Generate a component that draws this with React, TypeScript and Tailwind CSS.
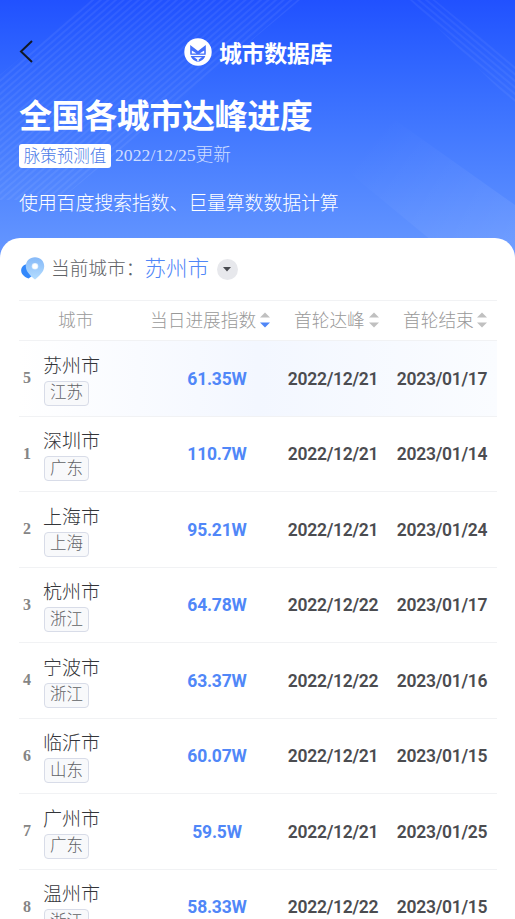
import clsx from "clsx";

type City = { rank: number; name: string; province: string; index: string; peak: string; end: string };

const CITIES: City[] = [
  { rank: 5, name: "苏州市", province: "江苏", index: "61.35W", peak: "2022/12/21", end: "2023/01/17" },
  { rank: 1, name: "深圳市", province: "广东", index: "110.7W", peak: "2022/12/21", end: "2023/01/14" },
  { rank: 2, name: "上海市", province: "上海", index: "95.21W", peak: "2022/12/21", end: "2023/01/24" },
  { rank: 3, name: "杭州市", province: "浙江", index: "64.78W", peak: "2022/12/22", end: "2023/01/17" },
  { rank: 4, name: "宁波市", province: "浙江", index: "63.37W", peak: "2022/12/22", end: "2023/01/16" },
  { rank: 6, name: "临沂市", province: "山东", index: "60.07W", peak: "2022/12/21", end: "2023/01/15" },
  { rank: 7, name: "广州市", province: "广东", index: "59.5W", peak: "2022/12/21", end: "2023/01/25" },
  { rank: 8, name: "温州市", province: "浙江", index: "58.33W", peak: "2022/12/22", end: "2023/01/15" },
];

const CURRENT = "苏州市";

function Logo() {
  return (
    <svg width="28" height="28" viewBox="0 0 28 28">
      <circle cx="14" cy="14" r="13.7" fill="#fff" />
      <path d="M6.200 7 14 13l7.800-6v8c0 4.700-3.500 8.300-7.800 8.800-4.300-.5-7.800-4.100-7.800-8.800Z" fill="#4470fb" />
      <path d="M7.800 12.600 12.500 15.500H7.800ZM20.200 12.600l-4.700 2.900h4.700Z" fill="#fff" />
      <path d="M5.500 17.400h17" stroke="#fff" strokeWidth="1.200" />
      <path d="M10 19.300h8l-3.300 2.300v1.600h-1.400v-1.600Z" fill="#fff" />
    </svg>
  );
}

function Pin() {
  return (
    <svg width="24" height="24" viewBox="0 0 24 24">
      <defs>
        <linearGradient id="pin" x1="0" y1="0" x2="0" y2="1">
          <stop offset="0" stopColor="#86b9f8" />
          <stop offset="1" stopColor="#b4ddff" />
        </linearGradient>
        <radialGradient id="hole">
          <stop offset="0.6" stopColor="#fff" />
          <stop offset="1" stopColor="#d5e9fe" />
        </radialGradient>
      </defs>
      <path d="M7.500 7C3 7-.2 10 .2 14c.3 4 4.300 6.300 7.300 7.500L11 19Z" fill="#3288fb" />
      <path d="M14 .2c5.300 0 9.200 3.800 9.200 9 0 5.600-5 9.600-9.200 13.300-4.200-3.700-9.200-7.700-9.200-13.300 0-5.200 3.900-9 9.200-9Z" fill="url(#pin)" />
      <circle cx="14" cy="9.300" r="3.300" fill="url(#hole)" />
    </svg>
  );
}

function Sort({ active }: { active?: boolean }) {
  return (
    <svg width="10" height="16" viewBox="0 0 10 16">
      <path d="M0 5.500 5 0.500l5 5Z" fill="#c0c0c0" />
      <path d="M0 10.500h10l-5 5Z" fill={active ? "#4f86f7" : "#c0c0c0"} />
    </svg>
  );
}

function HeaderArt() {
  return (
    <svg className="absolute inset-0" width="515" height="260" viewBox="0 0 515 260">
      <defs>
        <pattern id="up" width="5" height="5" patternUnits="userSpaceOnUse" patternTransform="rotate(-41)">
          <path d="M0 1h5" stroke="#fff" strokeOpacity=".12" />
        </pattern>
        <pattern id="down" width="5" height="5" patternUnits="userSpaceOnUse" patternTransform="rotate(40)">
          <path d="M0 1h5" stroke="#fff" strokeOpacity=".1" />
        </pattern>
        <linearGradient id="beam" gradientUnits="userSpaceOnUse" x1="370" y1="140" x2="500" y2="245">
          <stop offset="0" stopColor="#fff" stopOpacity="0" />
          <stop offset="1" stopColor="#fff" stopOpacity=".08" />
        </linearGradient>
      </defs>
      <path d="M0 75 90 0H300L60 200H0Z" fill="url(#up)" />
      <path d="M410 0h25l80 65v40Z" fill="url(#down)" />
      <path d="M340 165 395 120 515 205v55h-60Z" fill="url(#beam)" />
    </svg>
  );
}

function Row({ city }: { city: City }) {
  return (
    <div
      className={clsx(
        "grid h-[75.5px] grid-cols-[25px_111px_124px_108px_110px] items-center border-b border-[#f1f2f4]",
        city.name === CURRENT && "bg-linear-to-r from-white via-[#f3f7ff] to-[#fafcff]",
      )}
    >
      <span className="pl-1 font-['Liberation_Serif'] text-base font-bold text-[#858585]">{city.rank}</span>
      <div className="flex flex-col items-start">
        <span className="-ml-px text-[19px] leading-7 text-[#333539]">{city.name}</span>
        <span className="mt-0.5 flex h-[25px] w-[45px] items-center justify-center rounded border border-[#d8dce8] bg-[#f8f9fb] pb-1 text-[16.500px] leading-none text-[#606266]">
          {city.province}
        </span>
      </div>
      <span className="pt-px text-center font-[Roboto] text-[17.5px] font-bold tracking-[-0.2px] text-[#5087f8]">{city.index}</span>
      <span className="pt-px text-center font-[Roboto] text-[17.5px] font-semibold tracking-[-0.3px] text-[#4b4c50]">{city.peak}</span>
      <span className="pt-px text-center font-[Roboto] text-[17.5px] font-semibold tracking-[-0.3px] text-[#4b4c50]">{city.end}</span>
    </div>
  );
}

export default function App() {
  return (
    <div className="h-[919px] w-[515px] overflow-hidden bg-white font-['Noto_Sans_CJK_SC',sans-serif] font-light">
      <header className="relative h-[260px] overflow-hidden bg-linear-to-b from-[#2151ff] to-[#6798ff] text-white">
        <HeaderArt />
        <div className="relative px-[19px]">
          <div className="flex h-[103px] items-center justify-center gap-[7px] pl-px">
            <svg className="absolute left-[19px]" width="15" height="24" viewBox="0 0 15 24">
              <path d="M13 1 2 11.500 13 22" fill="none" stroke="#101828" strokeWidth="2" />
            </svg>
            <Logo />
            <span className="pt-0.5 text-[23px] font-bold tracking-[-0.4px]">城市数据库</span>
          </div>
          <h1 className="-mt-2.5 text-[33px] leading-[42px] font-bold tracking-[-0.4px]">全国各城市达峰进度</h1>
          <div className="mt-[9px] flex items-center gap-1">
            <span className="flex h-6 w-[92px] items-center justify-center rounded-[3px] bg-white pb-0.5 text-[16.5px] leading-none text-[#4d7ce8]">脉策预测值</span>
            <span className="pb-0.5 font-['Liberation_Serif','Noto_Sans_CJK_SC',serif] text-[17.700px] leading-[22px] text-[#cfddff]">2022/12/25更新</span>
          </div>
          <p className="mt-[20px] text-[19px] leading-7 tracking-[-0.2px]">使用百度搜索指数、巨量算数数据计算</p>
        </div>
      </header>

      <main className="relative -mt-[22px] rounded-t-[20px] bg-white px-[19px] pr-[18px]">
        <div className="flex h-[62px] items-center">
          <div className="ml-0.5"><Pin /></div>
          <span className="ml-1.5 pb-[3px] text-[18.700px] text-[#606266]">当前城市：</span>
          <span className="pb-[3px] text-[21.500px] text-[#4f86f7]">{CURRENT}</span>
          <button className="ml-2 flex size-[21px] items-center justify-center rounded-full bg-[#e7e8ec]">
            <svg width="8" height="5" viewBox="0 0 8 5"><path d="M0 0h8L4 4.500Z" fill="#484a4f" /></svg>
          </button>
        </div>

        <div className="grid h-[41px] grid-cols-[131px_144px_109px_94px] items-center border-y border-[#f1f2f4] text-[17.700px] text-[#999]">
          <span className="pb-[3px] pl-[39px]">城市</span>
          <span className="flex items-center gap-1"><span className="pb-[3px]">当日进展指数</span><Sort active /></span>
          <span className="flex items-center gap-1"><span className="pb-[3px]">首轮达峰</span><Sort /></span>
          <span className="flex items-center gap-[3px]"><span className="pb-[3px]">首轮结束</span><Sort /></span>
        </div>
        {CITIES.map((c) => <Row key={c.rank} city={c} />)}
      </main>
    </div>
  );
}
